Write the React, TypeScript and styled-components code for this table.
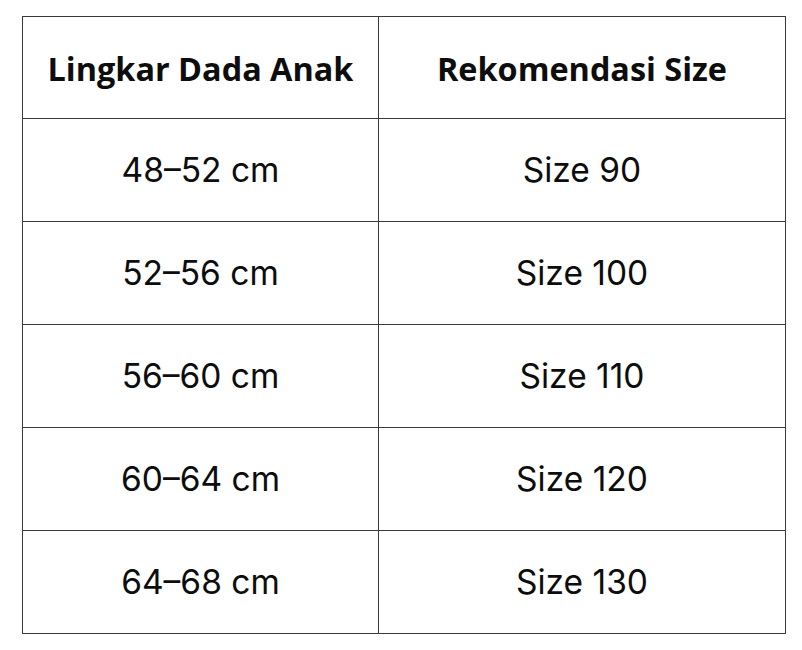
import React from "react";
import styled, { createGlobalStyle } from "styled-components";

const Global = createGlobalStyle`
  html, body { margin: 0; padding: 0; background: #ffffff; }
  body { font-family: "Open Sans", "Liberation Sans", sans-serif; color: #111; }
`;

const Page = styled.div`
  padding: 16px 17px 0 22px;
`;

const Table = styled.table`
  border-collapse: collapse;
  width: 763px;
  table-layout: fixed;
`;

const Col = styled.col<{ $w: number }>`
  width: ${(p) => p.$w}px;
`;

const HeadCell = styled.th`
  height: 101px;
  padding: 0;
  border: 1.5px solid #3a3a3a;
  font-family: "Open Sans", "Liberation Sans", sans-serif;
  font-weight: 700;
  font-size: 32.4px;
  color: #0d0d0d;
  text-align: center;
  vertical-align: middle;
  white-space: nowrap;
`;

const Cell = styled.td`
  height: 102px;
  padding: 0;
  border: 1.5px solid #3a3a3a;
  font-family: "Inter", "Open Sans", sans-serif;
  font-weight: 400;
  font-size: 33.5px;
  color: #0d0d0d;
  text-align: center;
  vertical-align: middle;
  white-space: nowrap;
`;

const rows = [
  ["48–52 cm", "Size 90"],
  ["52–56 cm", "Size 100"],
  ["56–60 cm", "Size 110"],
  ["60–64 cm", "Size 120"],
  ["64–68 cm", "Size 130"],
];

export default function App() {
  return (
    <Page>
      <Global />
      <Table>
        <colgroup>
          <Col $w={356} />
          <Col $w={407} />
        </colgroup>
        <thead>
          <tr>
            <HeadCell>Lingkar Dada Anak</HeadCell>
            <HeadCell>Rekomendasi Size</HeadCell>
          </tr>
        </thead>
        <tbody>
          {rows.map(([a, b]) => (
            <tr key={a}>
              <Cell>{a}</Cell>
              <Cell>{b}</Cell>
            </tr>
          ))}
        </tbody>
      </Table>
    </Page>
  );
}
